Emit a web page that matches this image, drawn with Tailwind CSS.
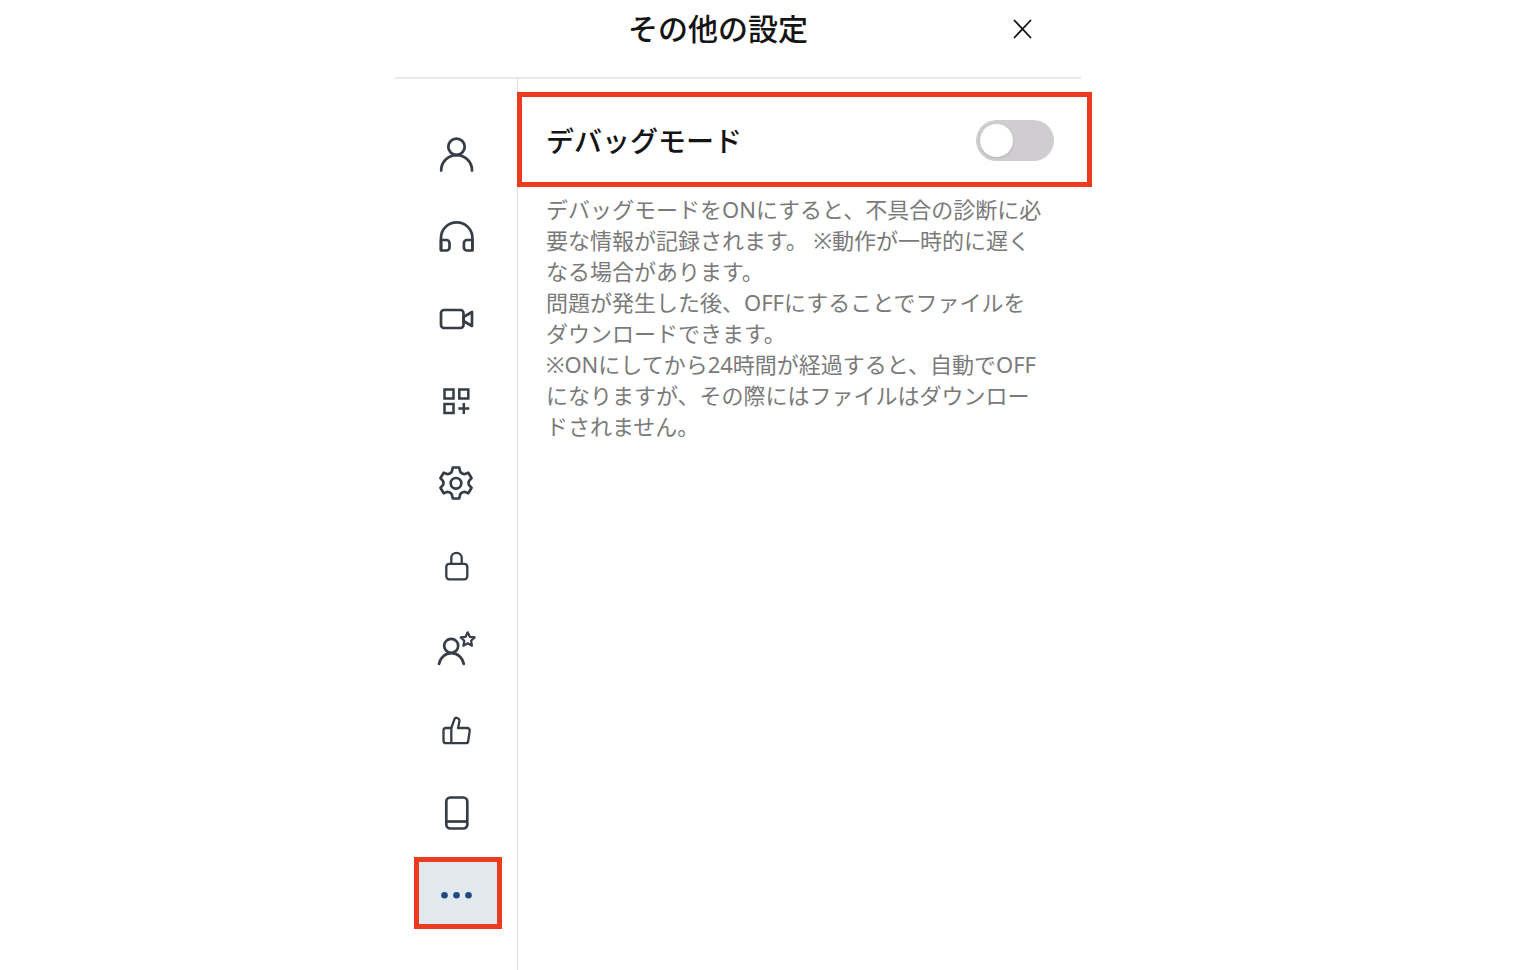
<!DOCTYPE html>
<html lang="ja">
<head>
  <meta charset="UTF-8" />
  <meta name="viewport" content="width=device-width, initial-scale=1.0"/>
  <title>その他の設定</title>
  <script src="https://cdn.jsdelivr.net/npm/@tailwindcss/browser@4"></script>
</head>
<body class="bg-white font-['Noto_Sans','Noto_Sans_CJK_JP',sans-serif] text-[#141414]">
  <div class="mx-auto flex min-h-screen max-w-[732px] flex-col">

    <!-- Header -->
    <header class="mr-[46px] flex h-[79px] items-start border-b-2 border-[#e6e6eb] pr-10">
      <span class="w-9"></span>
      <h1 class="flex-1 pt-2 text-center text-[30px] leading-[42px] font-medium">その他の設定</h1>
      <button type="button" aria-label="閉じる" class="mt-[11px] flex h-9 w-9 items-center justify-center">
        <svg class="h-5 w-5" viewBox="0 0 20 20" fill="none" stroke="#141414" stroke-width="1.800" stroke-linecap="round">
          <path d="M1.500 1.500 17.500 18.500M17.500 1.500 1.500 18.500"/>
        </svg>
      </button>
    </header>

    <div class="flex flex-1">
      <!-- Sidebar -->
      <nav aria-label="設定メニュー" class="flex w-[123px] shrink-0 flex-col justify-between border-r border-[#dcdce2] pt-[37px] pb-[41px] pl-[19px]">
        <button type="button" aria-label="プロフィール" class="flex h-[72px] w-[88px] items-center justify-center pt-1 pr-1">
          <svg class="h-10 w-10" viewBox="0 0 40 40" fill="none" stroke="#363d46" stroke-width="2.800" stroke-linecap="round">
            <circle cx="20.500" cy="12.800" r="8.200"/>
            <path d="M5.200 36.500a15.400 15.400 0 0 1 30.800 0"/>
          </svg>
        </button>
        <button type="button" aria-label="音声" class="flex h-[72px] w-[88px] items-center justify-center pt-1 pr-1">
          <svg class="h-10 w-10" viewBox="0 0 40 40" fill="none" stroke="#363d46" stroke-width="2.700" stroke-linejoin="round">
            <path d="M5 34.500V22a15.700 15.700 0 0 1 31.400 0v12.500"/>
            <path d="M5 24h5.500a3 3 0 0 1 3 3v4.500a3 3 0 0 1-3 3H5zM36.400 24h-5.500a3 3 0 0 0-3 3v4.500a3 3 0 0 0 3 3h5.500z"/>
          </svg>
        </button>
        <button type="button" aria-label="ビデオ" class="flex h-[72px] w-[88px] items-center justify-center pt-1 pr-1">
          <svg class="h-10 w-10" viewBox="0 0 40 40" fill="none" stroke="#363d46" stroke-width="2.700" stroke-linejoin="round">
            <rect x="5" y="11" width="22.500" height="18" rx="3"/>
            <path d="m27.500 18 8.500-5v14l-8.500-5z"/>
          </svg>
        </button>
        <button type="button" aria-label="アプリ" class="flex h-[72px] w-[88px] items-center justify-center pt-1 pr-1">
          <svg class="h-10 w-10" viewBox="0 0 40 40" fill="none" stroke="#363d46" stroke-width="2.500">
            <path d="M8.500 8.500h9v9h-9zM23.300 8.500h9v9h-9zM8.500 23h9v9h-9z"/>
            <path d="M27.800 22v11M22.300 27.500h11"/>
          </svg>
        </button>
        <button type="button" aria-label="設定" class="flex h-[72px] w-[88px] items-center justify-center pt-1 pr-1">
          <svg class="h-10 w-10" viewBox="0 0 40 40" fill="none" stroke="#363d46" stroke-width="2.700" stroke-linejoin="round">
            <path d="M16.800 4.500h6.400l1 4q.3 1 1.300 1.500l1.500.9q1 .5 2 .1l3.300-1.300 3.300 5.500-2.500 2.700q-.5.600-.5 1.300v1.600q0 .7.500 1.300l2.500 2.700-3.300 5.500-3.300-1.300q-1-.4-2 .1l-1.500.9q-1 .5-1.300 1.500l-1 4h-6.400l-1-4q-.3-1-1.300-1.500l-1.500-.9q-1-.5-2-.1l-3.300 1.300-3.300-5.500 2.500-2.700q.5-.6.5-1.300v-1.600q0-.7-.5-1.300l-2.500-2.700 3.300-5.500 3.300 1.300q1 .4 2-.1l1.500-.9q1-.5 1.300-1.500z"/>
            <circle cx="20" cy="20.300" r="5.300"/>
          </svg>
        </button>
        <button type="button" aria-label="セキュリティ" class="flex h-[72px] w-[88px] items-center justify-center pt-1 pr-1">
          <svg class="h-10 w-10" viewBox="0 0 40 40" fill="none" stroke="#363d46" stroke-width="2.300">
            <rect x="10.300" y="17.800" width="21" height="15.500" rx="3"/>
            <path d="M15.300 17.800V12a5.200 5.200 0 0 1 10.400 0v5.800"/>
          </svg>
        </button>
        <button type="button" aria-label="お気に入りユーザー" class="flex h-[72px] w-[88px] items-center justify-center pt-1 pr-1">
          <svg class="h-10 w-10" viewBox="0 0 40 40" fill="none" stroke="#363d46" stroke-width="2.700" stroke-linecap="round" stroke-linejoin="round">
            <circle cx="15.200" cy="17.800" r="7"/>
            <path d="M3 36c1.200-6.500 6.200-10.800 12.400-10.800S26.600 29.500 27.800 36"/>
            <path stroke-width="2.200" d="m31.700 4.300 2.100 4.500 4.900.6-3.600 3.400.9 4.900-4.300-2.400-4.300 2.400.9-4.900-3.600-3.400 4.900-.6z"/>
          </svg>
        </button>
        <button type="button" aria-label="リアクション" class="flex h-[72px] w-[88px] items-center justify-center pt-1 pr-1">
          <svg class="h-10 w-10" viewBox="0 0 40 40" fill="none" stroke="#363d46" stroke-width="2.300" stroke-linejoin="round">
            <path d="M15.300 18H10a2.500 2.500 0 0 0-2.500 2.500v10.200A2.500 2.500 0 0 0 10 33.200h5.300z"/>
            <path d="m15.300 18 3.200-8.900c.5-1.300 1.300-1.500 2.200-1.300 1.900.4 3.100 1.900 2.700 3.700L22 18h9.300a2.500 2.500 0 0 1 2.400 2.900L32.200 31a2.500 2.500 0 0 1-2.500 2.200H15.300"/>
          </svg>
        </button>
        <button type="button" aria-label="デバイス" class="flex h-[72px] w-[88px] items-center justify-center pt-1 pr-1">
          <svg class="h-10 w-10" viewBox="0 0 40 40" fill="none" stroke="#363d46" stroke-width="2.700">
            <rect x="10.300" y="4.500" width="21" height="31" rx="4"/>
            <path d="M10.300 28.500h21"/>
          </svg>
        </button>
        <button type="button" aria-label="その他" aria-current="page" class="flex h-[72px] w-[88px] items-center justify-center border-5 border-[#ec3c20] bg-[#e1e9ef] pt-1 pr-1">
          <svg class="h-10 w-10 shrink-0" viewBox="0 0 40 40" fill="#1f4a80">
            <circle cx="8.500" cy="20.300" r="3.300"/>
            <circle cx="20.500" cy="20.300" r="3.300"/>
            <circle cx="32.500" cy="20.300" r="3.300"/>
          </svg>
        </button>
      </nav>

      <!-- Debug mode -->
      <main class="flex-1 pt-[13px]">
        <div class="mr-[35px] -ml-px flex h-[95px] items-center justify-between border-5 border-[#ec3c20] pt-0.5 pr-[33px] pl-6">
          <label for="debugMode" class="text-[28px] leading-10 font-medium">デバッグモード</label>
          <input id="debugMode" type="checkbox" role="switch"
                 class="h-[41px] w-[78px] appearance-none rounded-full bg-[#d0cdd0] p-1 before:block before:h-[33px] before:w-[33px] before:rounded-full before:bg-white before:shadow-sm checked:bg-[#1f4a80] checked:before:ml-auto"/>
        </div>
        <p class="mt-[7px] pl-7 text-[22px] leading-[31px] text-[#7a7a7a]">
          デバッグモードをONにすると、不具合の診断に必<br/>要な情報が記録されます。 ※動作が一時的に遅く<br/>なる場合があります。<br/>
          問題が発生した後、OFFにすることでファイルを<br/>ダウンロードできます。<br/>
          ※ONにしてから24時間が経過すると、自動でOFF<br/>になりますが、その際にはファイルはダウンロー<br/>ドされません。
        </p>
      </main>
    </div>
  </div>
</body>
</html>
